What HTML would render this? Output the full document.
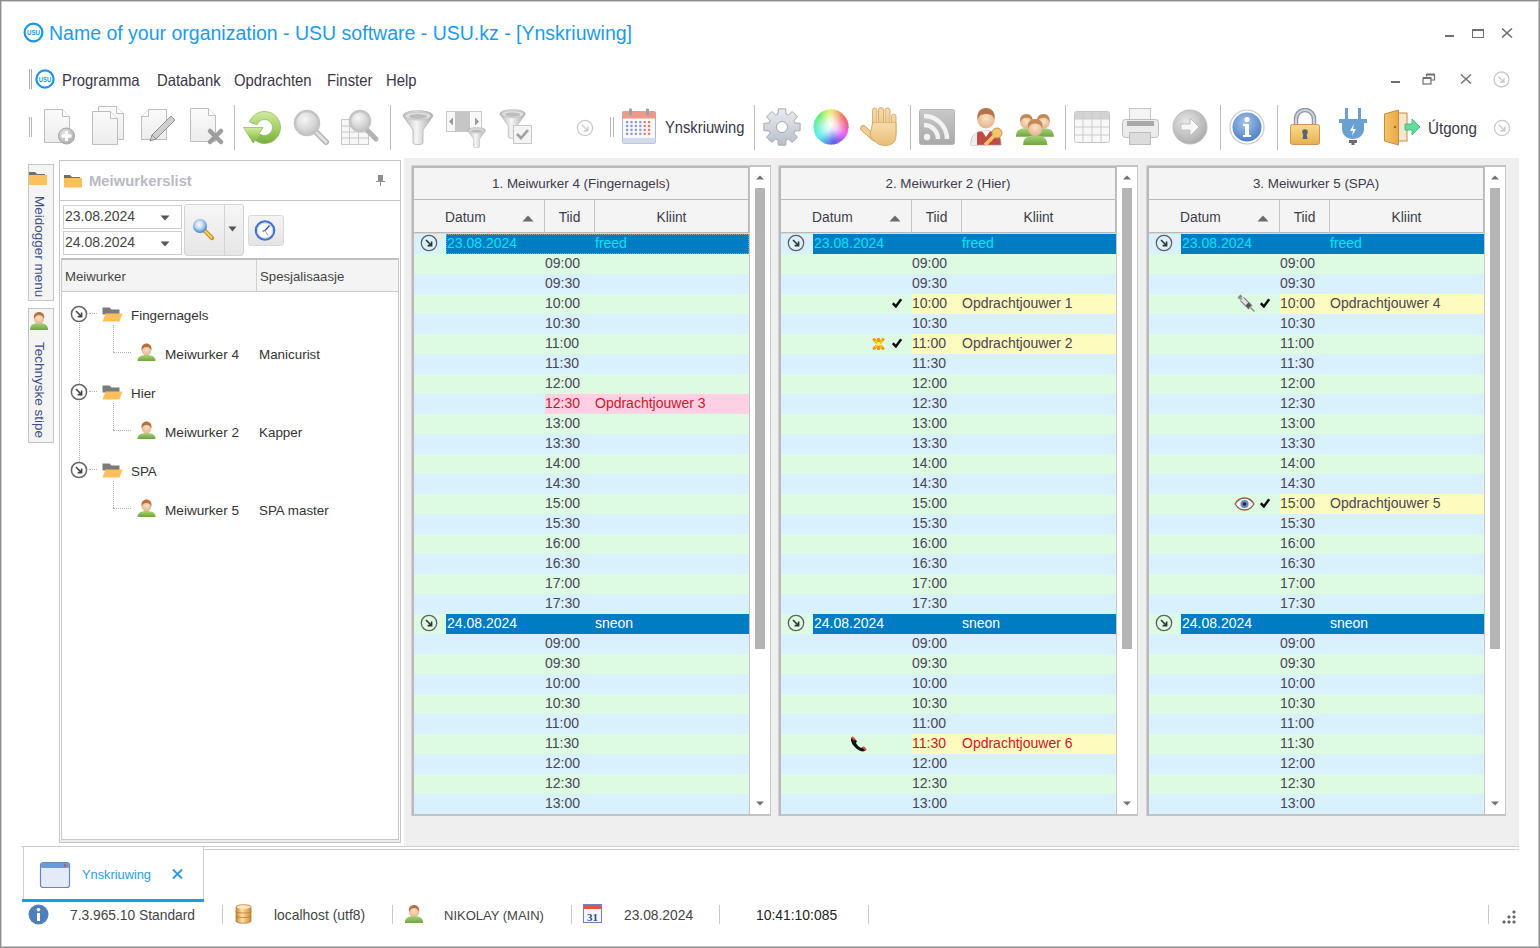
<!DOCTYPE html>
<html><head><meta charset="utf-8">
<style>
*{box-sizing:border-box;margin:0;padding:0}
html,body{width:1540px;height:948px;overflow:hidden;background:#fff;font-family:"Liberation Sans",sans-serif;color:#333}
.abs{position:absolute}
#win{position:absolute;left:0;top:0;width:1540px;height:948px;border:1px solid #8f8f8f;box-shadow:inset 1px 1px 0 #cdcdcd,inset -1px -1px 0 #c4c4c4;background:#fff}
.t{position:absolute;white-space:nowrap}
/* title */
#title{left:49px;top:20px;font-size:19.5px;color:#1a9cea;line-height:26px}
/* menu */
.menu{top:71px;font-size:16.5px;color:#3b3546;line-height:18px;transform-origin:0 0;transform:scaleX(0.9)}
/* toolbar */
.sep{position:absolute;width:1px;background:#bdbdbd}
/* gray work area */
#work{left:404px;top:158px;width:1115px;height:688px;background:#efefef}
.grid{position:absolute;top:165px;height:649px;border:2px solid #b7b7b7;background:#fff}
.gh1{position:absolute;left:0;top:0;right:0;height:33px;background:#f4f4f4;border-bottom:1px solid #b7b7b7;font-size:13.5px;color:#3b3546;text-align:center;line-height:34px}
.gh2{position:absolute;left:0;top:33px;right:0;height:34px;background:#f4f4f4;border-bottom:1px solid #b7b7b7;font-size:13.5px;color:#3b3546}
.row{position:absolute;left:0;right:0;height:20px;font-size:14px;line-height:20px;color:#3b3546}
.ev{background:#d9f0fd}
.od{background:#dff9e2}
.sb{position:absolute;top:165px;width:22px;height:649px;background:#fff;border:1px solid #d0d0d0;border-left:none}
</style></head><body>
<div id="win"></div>
<svg width="0" height="0" style="position:absolute"><defs>
<linearGradient id="gdoc" x1="0" y1="0" x2="0" y2="1"><stop offset="0" stop-color="#fbfbfb"/><stop offset="1" stop-color="#ececec"/></linearGradient>
<radialGradient id="ggray" cx="0.4" cy="0.35" r="0.7"><stop offset="0" stop-color="#e8e8e8"/><stop offset="1" stop-color="#a9a9a9"/></radialGradient>
<linearGradient id="ggreen" x1="0" y1="0" x2="0" y2="1"><stop offset="0" stop-color="#c4e08e"/><stop offset="1" stop-color="#7fb43c"/></linearGradient>
<radialGradient id="glens" cx="0.4" cy="0.35" r="0.6"><stop offset="0" stop-color="#f7f7f7"/><stop offset="1" stop-color="#c9c9c9"/></radialGradient>
<linearGradient id="gfun" x1="0" y1="0" x2="1" y2="0"><stop offset="0" stop-color="#b5b5b5"/><stop offset="0.45" stop-color="#f5f5f5"/><stop offset="1" stop-color="#a8a8a8"/></linearGradient>
<linearGradient id="ggear" x1="0" y1="0" x2="0" y2="1"><stop offset="0" stop-color="#e9ecf1"/><stop offset="1" stop-color="#b9bec8"/></linearGradient>
<radialGradient id="gwheelw" cx="0.5" cy="0.5" r="0.5"><stop offset="0" stop-color="#fff" stop-opacity="1"/><stop offset="0.25" stop-color="#fff" stop-opacity="0.8"/><stop offset="1" stop-color="#fff" stop-opacity="0"/></radialGradient>
<linearGradient id="ghand" x1="0" y1="0" x2="0" y2="1"><stop offset="0" stop-color="#f6dcaa"/><stop offset="1" stop-color="#e8bd78"/></linearGradient>
<linearGradient id="grss" x1="0" y1="0" x2="0" y2="1"><stop offset="0" stop-color="#c9c9c9"/><stop offset="1" stop-color="#a9a9a9"/></linearGradient>
<radialGradient id="ginfo" cx="0.45" cy="0.35" r="0.65"><stop offset="0" stop-color="#a8c4ee"/><stop offset="1" stop-color="#4f7fc6"/></radialGradient>
<linearGradient id="glock" x1="0" y1="0" x2="0" y2="1"><stop offset="0" stop-color="#f9dc8e"/><stop offset="1" stop-color="#e6b14f"/></linearGradient>
<linearGradient id="gdoor" x1="0" y1="0" x2="1" y2="0"><stop offset="0" stop-color="#f6c56b"/><stop offset="1" stop-color="#e9a848"/></linearGradient>
<radialGradient id="gface" cx="0.5" cy="0.4" r="0.6"><stop offset="0" stop-color="#fbe2c4"/><stop offset="1" stop-color="#e3b48a"/></radialGradient>
<linearGradient id="gpersg" x1="0" y1="0" x2="0" y2="1"><stop offset="0" stop-color="#a9d27a"/><stop offset="1" stop-color="#6ea43d"/></linearGradient>
<linearGradient id="gfolder" x1="0" y1="0" x2="0" y2="1"><stop offset="0" stop-color="#fcd27a"/><stop offset="1" stop-color="#f6b34e"/></linearGradient>
</defs></svg>


<!-- title bar -->
<svg class="abs" style="left:23px;top:22px" width="21" height="21" viewBox="0 0 21 21"><circle cx="10.5" cy="10.5" r="8.9" fill="none" stroke="#1b95ea" stroke-width="2.2"/><text x="10.5" y="13.4" font-family="Liberation Sans" font-weight="bold" font-size="8" fill="#1b95ea" text-anchor="middle" textLength="13" lengthAdjust="spacingAndGlyphs">USU</text></svg>
<div class="t" id="title">Name of your organization - USU software - USU.kz - [Ynskriuwing]</div>


<!-- window controls -->
<div class="abs" style="left:1445px;top:35px;width:9px;height:2px;background:#6f6f6f"></div>
<div class="abs" style="left:1472px;top:29px;width:12px;height:9px;border:1px solid #6f6f6f;border-top-width:2px"></div>
<svg class="abs" style="left:1501px;top:28px" width="12" height="10" viewBox="0 0 12 10"><path d="M1 0.5L11 9.5M11 0.5L1 9.5" stroke="#6f6f6f" stroke-width="1.6"/></svg>

<!-- menu bar -->
<div class="abs" style="left:29px;top:69px;width:1px;height:20px;background:#aaa"></div>
<div class="abs" style="left:31px;top:69px;width:1px;height:20px;background:#aaa"></div>
<svg class="abs" style="left:35px;top:69px" width="20" height="20" viewBox="0 0 20 20"><circle cx="10" cy="10" r="8.6" fill="none" stroke="#1b95ea" stroke-width="2.2"/><text x="10" y="12.8" font-family="Liberation Sans" font-weight="bold" font-size="7.6" fill="#1b95ea" text-anchor="middle" textLength="12.5" lengthAdjust="spacingAndGlyphs">USU</text></svg>
<div class="t menu" style="left:62px">Programma</div>
<div class="t menu" style="left:157px">Databank</div>
<div class="t menu" style="left:234px">Opdrachten</div>
<div class="t menu" style="left:327px">Finster</div>
<div class="t menu" style="left:386px">Help</div>
<div class="abs" style="left:1391px;top:81px;width:9px;height:2px;background:#6f6f6f"></div>
<svg class="abs" style="left:1422px;top:73px" width="14" height="12" viewBox="0 0 14 12"><path d="M4.5 3.5V1.5h8v5.5h-4" fill="none" stroke="#6f6f6f" stroke-width="1.2"/><path d="M4.5 1.5h8" stroke="#6f6f6f" stroke-width="2"/><rect x="1" y="5" width="8" height="6" fill="none" stroke="#6f6f6f" stroke-width="1.2"/><path d="M1 5h8" stroke="#6f6f6f" stroke-width="2"/></svg>
<svg class="abs" style="left:1460px;top:74px" width="12" height="10" viewBox="0 0 12 10"><path d="M1 0.5L11 9.5M11 0.5L1 9.5" stroke="#7a7a7a" stroke-width="1.6"/></svg>
<svg class="abs" style="left:1493px;top:71px" width="17" height="17" viewBox="0 0 17 17"><circle cx="8.5" cy="8.5" r="7.5" fill="none" stroke="#c8c8c8" stroke-width="1.3"/><path d="M5.5 5.5L11 11M11 7v4H7" fill="none" stroke="#c8c8c8" stroke-width="1.3"/></svg>

<!-- toolbar -->
<div class="abs" style="left:29px;top:117px;width:1px;height:20px;background:#b5b5b5"></div><div class="abs" style="left:31px;top:117px;width:1px;height:20px;background:#b5b5b5"></div>
<svg class="abs" style="left:43px;top:108px" width="34" height="37" viewBox="0 0 34 37"><path d="M1.5 1.5h18l7 7v26h-25z" fill="url(#gdoc)" stroke="#bdbdbd" stroke-width="1"/><path d="M19.5 1.5v7h7" fill="#fff" stroke="#bdbdbd" stroke-width="1"/><circle cx="23.5" cy="28" r="8" fill="url(#ggray)" stroke="#a6a6a6"/><path d="M23.5 23v10M18.5 28h10" stroke="#fff" stroke-width="3"/></svg>
<svg class="abs" style="left:91px;top:106px" width="34" height="40" viewBox="0 0 34 40"><path d="M7.5 0.5h18l7 7v26h-25z" fill="url(#gdoc)" stroke="#bdbdbd" stroke-width="1"/><path d="M25.5 0.5v7h7" fill="#fff" stroke="#bdbdbd" stroke-width="1"/><path d="M1.5 5.5h18l7 7v26h-25z" fill="url(#gdoc)" stroke="#bdbdbd" stroke-width="1"/><path d="M19.5 5.5v7h7" fill="#fff" stroke="#bdbdbd" stroke-width="1"/></svg>
<svg class="abs" style="left:140px;top:108px" width="36" height="39" viewBox="0 0 36 39"><path d="M1.5 8.5l7-7h18v30h-25z" fill="url(#gdoc)" stroke="#bdbdbd"/><path d="M8.5 1.5v7h-7" fill="#fff" stroke="#bdbdbd"/><path d="M31 8l4 4-19 19-6 2 2-6z" fill="#cfcfcf" stroke="#8d8d8d" stroke-width="1"/><path d="M12 27l4 4" stroke="#8d8d8d"/></svg>
<svg class="abs" style="left:189px;top:107px" width="36" height="40" viewBox="0 0 36 40"><path d="M1.5 1.5h18l7 7v26h-25z" fill="url(#gdoc)" stroke="#bdbdbd" stroke-width="1"/><path d="M19.5 1.5v7h7" fill="#fff" stroke="#bdbdbd" stroke-width="1"/><path d="M21 24l11 11M32 24l-11 11" stroke="#9d9d9d" stroke-width="4.5" stroke-linecap="round"/></svg>
<div class="sep" style="left:234px;top:105px;height:45px"></div>
<svg class="abs" style="left:243px;top:110px" width="39" height="35" viewBox="0 0 39 35"><defs><linearGradient id="grf" x1="0" y1="0" x2="0" y2="1"><stop offset="0" stop-color="#d2eaa4"/><stop offset="0.5" stop-color="#a6d06a"/><stop offset="1" stop-color="#78ad3a"/></linearGradient></defs><path d="M6.46 12.03A16 16 0 1 1 12.32 30.61L16.91 24.05A8 8 0 1 0 13.98 14.76Z" fill="url(#grf)" stroke="#86b84a" stroke-width="0.7"/><path d="M0.5 17.5h19.5l-9.8 15.5z" fill="url(#grf)" stroke="#86b84a" stroke-width="0.7"/></svg>
<svg class="abs" style="left:293px;top:109px" width="37" height="37" viewBox="0 0 37 37"><path d="M22 22l11 11" stroke="#b3b3b3" stroke-width="6" stroke-linecap="round"/><path d="M22 22l11 11" stroke="#e3e3e3" stroke-width="3" stroke-linecap="round"/><circle cx="14" cy="14" r="12" fill="url(#glens)" stroke="#c4c4c4" stroke-width="2.5"/></svg>
<svg class="abs" style="left:340px;top:109px" width="40" height="37" viewBox="0 0 40 37"><rect x="1.5" y="10.5" width="27" height="25" fill="#f7f7f7" stroke="#c8c8c8"/><path d="M1.5 17h27M1.5 23h27M1.5 29h27M9.5 10.5v25M18.5 10.5v25" stroke="#c8c8c8"/><path d="M27 21l9 9" stroke="#b3b3b3" stroke-width="5" stroke-linecap="round"/><circle cx="20" cy="12" r="10" fill="url(#glens)" stroke="#c4c4c4" stroke-width="2.5"/></svg>
<div class="sep" style="left:390px;top:105px;height:45px"></div>
<svg class="abs" style="left:401px;top:109px" width="34" height="37" viewBox="0 0 34 37"><g transform="translate(1 1) scale(1)"><path d="M1 6c0-7 30-7 30 0l-10 14v13c0 2-10 2-10 0v-13z" fill="url(#gfun)" stroke="#b2b2b2" stroke-width="0.8"/><ellipse cx="16" cy="6" rx="13" ry="4" fill="#e0e0e0" stroke="#c5c5c5"/><ellipse cx="16" cy="6.5" rx="9" ry="2.5" fill="#bdbdbd"/></g></svg>
<svg class="abs" style="left:445px;top:110px" width="42" height="38" viewBox="0 0 42 38"><rect x="1.5" y="1.5" width="35" height="20" fill="#f8f8f8" stroke="#c9c9c9"/><rect x="10" y="1.5" width="15" height="20" fill="#c6c6c6"/><path d="M4 11.5l4-4v8zM34 11.5l-4-4v8z" fill="#9a9a9a"/><g transform="translate(22 17) scale(0.6)"><path d="M1 6c0-7 30-7 30 0l-10 14v13c0 2-10 2-10 0v-13z" fill="url(#gfun)" stroke="#b2b2b2" stroke-width="0.8"/><ellipse cx="16" cy="6" rx="13" ry="4" fill="#e0e0e0" stroke="#c5c5c5"/><ellipse cx="16" cy="6.5" rx="9" ry="2.5" fill="#bdbdbd"/></g></svg>
<svg class="abs" style="left:498px;top:108px" width="36" height="38" viewBox="0 0 36 38"><g transform="translate(1 1) scale(0.85)"><path d="M1 6c0-7 30-7 30 0l-10 14v13c0 2-10 2-10 0v-13z" fill="url(#gfun)" stroke="#b2b2b2" stroke-width="0.8"/><ellipse cx="16" cy="6" rx="13" ry="4" fill="#e0e0e0" stroke="#c5c5c5"/><ellipse cx="16" cy="6.5" rx="9" ry="2.5" fill="#bdbdbd"/></g><rect x="15.5" y="17.5" width="18" height="18" fill="#f4f4f4" stroke="#c6c6c6"/><path d="M19 26l4 4 7-8" fill="none" stroke="#a0a0a0" stroke-width="2.6"/></svg>
<svg class="abs" style="left:576px;top:119px" width="19" height="18" viewBox="0 0 19 18"><circle cx="9" cy="9" r="7.6" fill="none" stroke="#c9c9c9" stroke-width="1.3"/><path d="M5.8 5.8L11.5 11.5M11.8 7.5v4.2H7.6" fill="none" stroke="#c9c9c9" stroke-width="1.4"/></svg>
<div class="abs" style="left:610px;top:117px;width:1px;height:20px;background:#b5b5b5"></div><div class="abs" style="left:613px;top:117px;width:1px;height:20px;background:#b5b5b5"></div>
<svg class="abs" style="left:621px;top:108px" width="37" height="38" viewBox="0 0 37 38"><rect x="1.5" y="3.5" width="33" height="32" rx="1.5" fill="#f7f8fc" stroke="#a9b3d3"/><rect x="1.5" y="3.5" width="33" height="7" fill="#ee9a86"/><rect x="1.5" y="30" width="33" height="5.5" fill="#d4daee"/><rect x="8" y="0.5" width="3" height="7" rx="1" fill="#9aa0b3"/><rect x="25" y="0.5" width="3" height="7" rx="1" fill="#9aa0b3"/><rect x="5.0" y="13.0" width="2.2" height="2.2" fill="#8f98c4"/><rect x="9.4" y="13.0" width="2.2" height="2.2" fill="#8f98c4"/><rect x="13.8" y="13.0" width="2.2" height="2.2" fill="#8f98c4"/><rect x="18.200000000000003" y="13.0" width="2.2" height="2.2" fill="#8f98c4"/><rect x="22.6" y="13.0" width="2.2" height="2.2" fill="#e47a66"/><rect x="27.0" y="13.0" width="2.2" height="2.2" fill="#e47a66"/><rect x="5.0" y="16.9" width="2.2" height="2.2" fill="#8f98c4"/><rect x="9.4" y="16.9" width="2.2" height="2.2" fill="#8f98c4"/><rect x="13.8" y="16.9" width="2.2" height="2.2" fill="#8f98c4"/><rect x="18.200000000000003" y="16.9" width="2.2" height="2.2" fill="#8f98c4"/><rect x="22.6" y="16.9" width="2.2" height="2.2" fill="#e47a66"/><rect x="27.0" y="16.9" width="2.2" height="2.2" fill="#e47a66"/><rect x="5.0" y="20.8" width="2.2" height="2.2" fill="#8f98c4"/><rect x="9.4" y="20.8" width="2.2" height="2.2" fill="#8f98c4"/><rect x="13.8" y="20.8" width="2.2" height="2.2" fill="#8f98c4"/><rect x="18.200000000000003" y="20.8" width="2.2" height="2.2" fill="#8f98c4"/><rect x="22.6" y="20.8" width="2.2" height="2.2" fill="#e47a66"/><rect x="27.0" y="20.8" width="2.2" height="2.2" fill="#e47a66"/><rect x="5.0" y="24.7" width="2.2" height="2.2" fill="#8f98c4"/><rect x="9.4" y="24.7" width="2.2" height="2.2" fill="#8f98c4"/><rect x="13.8" y="24.7" width="2.2" height="2.2" fill="#8f98c4"/><rect x="18.200000000000003" y="24.7" width="2.2" height="2.2" fill="#8f98c4"/><rect x="22.6" y="24.7" width="2.2" height="2.2" fill="#e47a66"/><rect x="27.0" y="24.7" width="2.2" height="2.2" fill="#e47a66"/></svg>
<div class="t" style="left:665px;top:119px;font-size:16px;line-height:18px;color:#3b3546;transform-origin:0 0;transform:scaleX(0.92)">Ynskriuwing</div>
<div class="sep" style="left:754px;top:105px;height:45px"></div>
<svg class="abs" style="left:763px;top:108px" width="38" height="38" viewBox="0 0 38 38"><path d="M31.90 15.01L37.13 15.32L37.13 22.68L31.90 22.99L31.47 24.17L30.94 25.30L34.42 29.22L29.22 34.42L25.30 30.94L24.17 31.47L22.99 31.90L22.68 37.13L15.32 37.13L15.01 31.90L13.83 31.47L12.70 30.94L8.78 34.42L3.58 29.22L7.06 25.30L6.53 24.17L6.10 22.99L0.87 22.68L0.87 15.32L6.10 15.01L6.53 13.83L7.06 12.70L3.58 8.78L8.78 3.58L12.70 7.06L13.83 6.53L15.01 6.10L15.32 0.87L22.68 0.87L22.99 6.10L24.17 6.53L25.30 7.06L29.22 3.58L34.42 8.78L30.94 12.70L31.47 13.83Z" fill="url(#ggear)" stroke="#a3a8b2" stroke-width="1"/><circle cx="19" cy="19" r="5.5" fill="#fff" stroke="#a3a8b2"/></svg>
<svg class="abs" style="left:813px;top:109px" width="37" height="37" viewBox="0 0 37 37"><defs><clipPath id="cw"><circle cx="18" cy="18" r="17.5"/></clipPath><radialGradient id="gww" cx="0.5" cy="0.45" r="0.55"><stop offset="0" stop-color="#fff" stop-opacity="1"/><stop offset="0.3" stop-color="#fff" stop-opacity="0.75"/><stop offset="0.75" stop-color="#fff" stop-opacity="0.15"/><stop offset="1" stop-color="#fff" stop-opacity="0"/></radialGradient></defs><g clip-path="url(#cw)"><path d="M18 18L43.00 18.00L42.56 22.68Z" fill="hsl(324,80%,62%)" stroke="hsl(324,80%,62%)" stroke-width="0.8"/><path d="M18 18L42.62 22.34L41.37 26.88Z" fill="hsl(313,80%,62%)" stroke="hsl(313,80%,62%)" stroke-width="0.8"/><path d="M18 18L41.49 26.55L39.47 30.80Z" fill="hsl(302,80%,62%)" stroke="hsl(302,80%,62%)" stroke-width="0.8"/><path d="M18 18L39.65 30.50L36.92 34.34Z" fill="hsl(291,80%,62%)" stroke="hsl(291,80%,62%)" stroke-width="0.8"/><path d="M18 18L37.15 34.07L33.80 37.37Z" fill="hsl(280,80%,62%)" stroke="hsl(280,80%,62%)" stroke-width="0.8"/><path d="M18 18L34.07 37.15L30.20 39.82Z" fill="hsl(269,80%,62%)" stroke="hsl(269,80%,62%)" stroke-width="0.8"/><path d="M18 18L30.50 39.65L26.22 41.61Z" fill="hsl(258,80%,62%)" stroke="hsl(258,80%,62%)" stroke-width="0.8"/><path d="M18 18L26.55 41.49L22.00 42.68Z" fill="hsl(247,80%,62%)" stroke="hsl(247,80%,62%)" stroke-width="0.8"/><path d="M18 18L22.34 42.62L17.65 43.00Z" fill="hsl(236,80%,62%)" stroke="hsl(236,80%,62%)" stroke-width="0.8"/><path d="M18 18L18.00 43.00L13.32 42.56Z" fill="hsl(225,80%,62%)" stroke="hsl(225,80%,62%)" stroke-width="0.8"/><path d="M18 18L13.66 42.62L9.12 41.37Z" fill="hsl(215,80%,62%)" stroke="hsl(215,80%,62%)" stroke-width="0.8"/><path d="M18 18L9.45 41.49L5.20 39.47Z" fill="hsl(205,80%,62%)" stroke="hsl(205,80%,62%)" stroke-width="0.8"/><path d="M18 18L5.50 39.65L1.66 36.92Z" fill="hsl(195,80%,62%)" stroke="hsl(195,80%,62%)" stroke-width="0.8"/><path d="M18 18L1.93 37.15L-1.37 33.80Z" fill="hsl(185,80%,62%)" stroke="hsl(185,80%,62%)" stroke-width="0.8"/><path d="M18 18L-1.15 34.07L-3.82 30.20Z" fill="hsl(181,80%,62%)" stroke="hsl(181,80%,62%)" stroke-width="0.8"/><path d="M18 18L-3.65 30.50L-5.61 26.22Z" fill="hsl(176,80%,62%)" stroke="hsl(176,80%,62%)" stroke-width="0.8"/><path d="M18 18L-5.49 26.55L-6.68 22.00Z" fill="hsl(172,80%,62%)" stroke="hsl(172,80%,62%)" stroke-width="0.8"/><path d="M18 18L-6.62 22.34L-7.00 17.65Z" fill="hsl(167,80%,62%)" stroke="hsl(167,80%,62%)" stroke-width="0.8"/><path d="M18 18L-7.00 18.00L-6.56 13.32Z" fill="hsl(160,80%,62%)" stroke="hsl(160,80%,62%)" stroke-width="0.8"/><path d="M18 18L-6.62 13.66L-5.37 9.12Z" fill="hsl(150,80%,62%)" stroke="hsl(150,80%,62%)" stroke-width="0.8"/><path d="M18 18L-5.49 9.45L-3.47 5.20Z" fill="hsl(140,80%,62%)" stroke="hsl(140,80%,62%)" stroke-width="0.8"/><path d="M18 18L-3.65 5.50L-0.92 1.66Z" fill="hsl(130,80%,62%)" stroke="hsl(130,80%,62%)" stroke-width="0.8"/><path d="M18 18L-1.15 1.93L2.20 -1.37Z" fill="hsl(120,80%,62%)" stroke="hsl(120,80%,62%)" stroke-width="0.8"/><path d="M18 18L1.93 -1.15L5.80 -3.82Z" fill="hsl(107,80%,62%)" stroke="hsl(107,80%,62%)" stroke-width="0.8"/><path d="M18 18L5.50 -3.65L9.78 -5.61Z" fill="hsl(93,80%,62%)" stroke="hsl(93,80%,62%)" stroke-width="0.8"/><path d="M18 18L9.45 -5.49L14.00 -6.68Z" fill="hsl(80,80%,62%)" stroke="hsl(80,80%,62%)" stroke-width="0.8"/><path d="M18 18L13.66 -6.62L18.35 -7.00Z" fill="hsl(67,80%,62%)" stroke="hsl(67,80%,62%)" stroke-width="0.8"/><path d="M18 18L18.00 -7.00L22.68 -6.56Z" fill="hsl(54,80%,62%)" stroke="hsl(54,80%,62%)" stroke-width="0.8"/><path d="M18 18L22.34 -6.62L26.88 -5.37Z" fill="hsl(43,80%,62%)" stroke="hsl(43,80%,62%)" stroke-width="0.8"/><path d="M18 18L26.55 -5.49L30.80 -3.47Z" fill="hsl(32,80%,62%)" stroke="hsl(32,80%,62%)" stroke-width="0.8"/><path d="M18 18L30.50 -3.65L34.34 -0.92Z" fill="hsl(21,80%,62%)" stroke="hsl(21,80%,62%)" stroke-width="0.8"/><path d="M18 18L34.07 -1.15L37.37 2.20Z" fill="hsl(10,80%,62%)" stroke="hsl(10,80%,62%)" stroke-width="0.8"/><path d="M18 18L37.15 1.93L39.82 5.80Z" fill="hsl(1,80%,62%)" stroke="hsl(1,80%,62%)" stroke-width="0.8"/><path d="M18 18L39.65 5.50L41.61 9.78Z" fill="hsl(352,80%,62%)" stroke="hsl(352,80%,62%)" stroke-width="0.8"/><path d="M18 18L41.49 9.45L42.68 14.00Z" fill="hsl(343,80%,62%)" stroke="hsl(343,80%,62%)" stroke-width="0.8"/><path d="M18 18L42.62 13.66L43.00 18.35Z" fill="hsl(334,80%,62%)" stroke="hsl(334,80%,62%)" stroke-width="0.8"/><circle cx="18" cy="18" r="18" fill="url(#gww)"/></g></svg>
<svg class="abs" style="left:860px;top:107px" width="37" height="40" viewBox="0 0 37 40"><path d="M3.5 21.5L14 31" stroke="#cf9f5f" stroke-width="6.4" stroke-linecap="round"/><path d="M3.5 21.5L14 31" stroke="#f0cf95" stroke-width="4.8" stroke-linecap="round"/><rect x="12.5" y="1" width="4.5" height="26" rx="2.2" fill="url(#ghand)" stroke="#cf9f5f" stroke-width="0.8"/><rect x="18.5" y="0.5" width="5" height="26" rx="2.4" fill="url(#ghand)" stroke="#cf9f5f" stroke-width="0.8"/><rect x="25" y="1" width="5" height="26" rx="2.4" fill="url(#ghand)" stroke="#cf9f5f" stroke-width="0.8"/><rect x="31.5" y="7" width="4.5" height="22" rx="2.2" fill="url(#ghand)" stroke="#cf9f5f" stroke-width="0.8"/><path d="M12.5 16h23.5v13c0 6-4 9.5-11 9.5-5 0-8-2-11-5l-4-4.5z" fill="url(#ghand)" stroke="#cf9f5f" stroke-width="0.8"/><path d="M13.3 16.5h22" stroke="#f3d8a6" stroke-width="1.2"/></svg>
<div class="sep" style="left:910px;top:105px;height:45px"></div>
<svg class="abs" style="left:918px;top:108px" width="38" height="38" viewBox="0 0 38 38"><rect x="1.5" y="1.5" width="35" height="35" rx="2" fill="url(#grss)" stroke="#b5b5b5"/><circle cx="9" cy="29" r="3.2" fill="#f2f2f2"/><path d="M6 17a14 14 0 0 1 14 14M6 8a23 23 0 0 1 23 23" fill="none" stroke="#f2f2f2" stroke-width="4.5"/></svg>
<svg class="abs" style="left:968px;top:106px" width="38" height="41" viewBox="0 0 38 41"><path d="M3 39c0-10 4-14 15-14s15 4 15 14z" fill="#c24a45" stroke="#9e9e9e" stroke-width="0.8"/><path d="M14 25l4 6 4-6z" fill="#fff"/><path d="M3 39c0-7 2-11 6-13v13z" fill="#eee"/><circle cx="18" cy="14" r="8.5" fill="url(#gface)"/><path d="M9.5 14c-1-8 3-12 8.5-12s10 4 8.5 12c-1-4-3-6-8.5-6s-7 2-8.5 6z" fill="#b8734a"/><circle cx="29" cy="27" r="5" fill="#f2c56a" stroke="#c89a44"/><path d="M26 30l-9 9" stroke="#f2c56a" stroke-width="3.5"/></svg>
<svg class="abs" style="left:1015px;top:110px" width="40" height="35" viewBox="0 0 40 35"><g transform="translate(0 4) scale(0.95)"><path d="M1 24c0-7 4-9 11-9s11 2 11 9z" fill="url(#gpersg)"/><circle cx="12" cy="9" r="6.5" fill="url(#gface)"/><path d="M5.5 9c-1-6 2-9 6.5-9s7.5 3 6.5 9c-1-3-3-5-6.5-5s-5.5 2-6.5 5z" fill="#c38758"/></g><g transform="translate(17 4) scale(0.95)"><path d="M1 24c0-7 4-9 11-9s11 2 11 9z" fill="url(#gpersg)"/><circle cx="12" cy="9" r="6.5" fill="url(#gface)"/><path d="M5.5 9c-1-6 2-9 6.5-9s7.5 3 6.5 9c-1-3-3-5-6.5-5s-5.5 2-6.5 5z" fill="#c38758"/></g><g transform="translate(7 9) scale(1.1)"><path d="M1 24c0-7 4-9 11-9s11 2 11 9z" fill="url(#gpersg)"/><circle cx="12" cy="9" r="6.5" fill="url(#gface)"/><path d="M5.5 9c-1-6 2-9 6.5-9s7.5 3 6.5 9c-1-3-3-5-6.5-5s-5.5 2-6.5 5z" fill="#c38758"/></g></svg>
<div class="sep" style="left:1065px;top:105px;height:45px"></div>
<svg class="abs" style="left:1073px;top:110px" width="38" height="34" viewBox="0 0 38 34"><rect x="1.5" y="1.5" width="35" height="31" rx="2" fill="#f8f8f8" stroke="#c6c6c6"/><rect x="2" y="2" width="34" height="7" fill="#d4d4d4"/><path d="M1.5 9h35M1.5 17h35M1.5 25h35M10 1.5v31M19 1.5v31M28 1.5v31" stroke="#cbcbcb"/></svg>
<svg class="abs" style="left:1121px;top:107px" width="40" height="39" viewBox="0 0 40 39"><rect x="8.5" y="1.5" width="21" height="14" fill="#f4f4f4" stroke="#c4c4c4"/><rect x="1.5" y="12.5" width="36" height="18" rx="3" fill="#ececec" stroke="#bdbdbd"/><rect x="6" y="14" width="27" height="5" fill="#a9a9a9"/><rect x="8.5" y="25.5" width="21" height="12" fill="#dcdcdc" stroke="#bdbdbd"/></svg>
<svg class="abs" style="left:1172px;top:109px" width="36" height="37" viewBox="0 0 36 37"><circle cx="18" cy="18" r="17" fill="url(#ggray)" stroke="#bdbdbd"/><path d="M9 15h9v-6l9 9-9 9v-6h-9z" fill="#f8f8f8" stroke="#b5b5b5" stroke-width="0.8"/></svg>
<div class="sep" style="left:1220px;top:105px;height:45px"></div>
<svg class="abs" style="left:1229px;top:109px" width="37" height="37" viewBox="0 0 37 37"><circle cx="18" cy="18" r="17" fill="#fff" stroke="#c3cbe4" stroke-width="1.2"/><circle cx="18" cy="18" r="14.5" fill="url(#ginfo)"/><circle cx="18" cy="10.5" r="2.6" fill="#fff"/><path d="M14 15h6v11h2v2h-8v-2h2v-9h-2z" fill="#fff"/></svg>
<div class="sep" style="left:1277px;top:105px;height:45px"></div>
<svg class="abs" style="left:1289px;top:108px" width="32" height="38" viewBox="0 0 32 38"><path d="M7 17V11a9 9 0 0 1 18 0v6" fill="none" stroke="#8e97a3" stroke-width="4.5"/><path d="M7 17V11a9 9 0 0 1 18 0v6" fill="none" stroke="#cfd4dc" stroke-width="2"/><rect x="1.5" y="16.5" width="29" height="20" rx="2" fill="url(#glock)" stroke="#d0905a"/><circle cx="16" cy="24" r="2.8" fill="#5b6470"/><path d="M14.5 25h3l1 6h-5z" fill="#5b6470"/></svg>
<svg class="abs" style="left:1338px;top:107px" width="31" height="40" viewBox="0 0 31 40"><rect x="7" y="1" width="3" height="12" fill="#6aa0d0"/><rect x="20" y="1" width="3" height="12" fill="#6aa0d0"/><path d="M1 12h28v4h-3v6c0 6-5 10-11 10s-11-4-11-10v-6h-3z" fill="#6aa0d0"/><path d="M16 17l-4 7h3l-1 5 4-7h-3z" fill="#fff"/><rect x="11" y="33" width="8" height="3" fill="#6b6b6b"/><rect x="13.5" y="35" width="3" height="3" fill="#6b6b6b"/></svg>
<svg class="abs" style="left:1383px;top:109px" width="39" height="37" viewBox="0 0 39 37"><rect x="14" y="4" width="10" height="28" fill="#f3e7cf" stroke="#c58a3c"/><path d="M1.5 5l14-4v35l-14-4z" fill="url(#gdoor)" stroke="#c58a3c"/><circle cx="12" cy="18" r="1.2" fill="#9a6a2c"/><path d="M22 15h7v-5l8 8-8 8v-5h-7z" fill="#62dd9a" stroke="#3fae72" stroke-width="0.8"/></svg>
<div class="t" style="left:1428px;top:119px;font-size:16.5px;line-height:18px;color:#3b3546;transform-origin:0 0;transform:scaleX(0.92)">Útgong</div>
<svg class="abs" style="left:1493px;top:119px" width="18" height="18" viewBox="0 0 18 18"><circle cx="9" cy="9" r="7.6" fill="none" stroke="#c9c9c9" stroke-width="1.3"/><path d="M5.8 5.8L11.5 11.5M11.8 7.5v4.2H7.6" fill="none" stroke="#c9c9c9" stroke-width="1.4"/></svg>

<!-- main area -->
<div class="abs" style="left:28px;top:164px;width:26px;height:137px;background:#f4f4f4;border:1px solid #c4c4c4"></div>
<div class="abs" style="left:28px;top:308px;width:26px;height:135px;background:#f4f4f4;border:1px solid #c4c4c4"></div>
<svg class="abs" style="left:28px;top:170px" width="19" height="16" viewBox="0 0 19 16"><path d="M1 2h6l2 2h8v2H1z" fill="#6e6e6e"/><rect x="1" y="5" width="18" height="10" fill="#fbbf5c"/></svg>
<div class="t" style="left:39px;top:196px;transform-origin:0 0;transform:rotate(90deg) translate(0,-8px);font-size:13.5px;line-height:16px;color:#3d4f85">Meidogger menu</div>
<svg class="abs" style="left:29px;top:311px" width="20" height="20" viewBox="0 0 20 20"><path d="M1 19c0-5 3-7 9-7s9 2 9 7z" fill="url(#gpersg)"/><circle cx="10" cy="8" r="5" fill="url(#gface)"/><path d="M5 8c-1-5 2-7 5-7s6 2 5 7c-1-2-2-4-5-4s-4 2-5 4z" fill="#b9703f"/></svg>
<div class="t" style="left:39px;top:342px;transform-origin:0 0;transform:rotate(90deg) translate(0,-8px);font-size:13.5px;line-height:16px;color:#3d4f85">Technyske stipe</div>
<div class="abs" style="left:59px;top:160px;width:342px;height:683px;border:1px solid #c6c6c6;background:#fff"></div><div class="abs" style="left:60px;top:840px;width:340px;height:2px;background:#ececec"></div>
<div class="abs" style="left:60px;top:200px;width:340px;height:1px;background:#c6c6c6"></div>
<svg class="abs" style="left:63px;top:173px" width="19" height="15" viewBox="0 0 19 15"><path d="M1 2h6l2 2h8v2H1z" fill="#6e6e6e"/><rect x="1" y="5" width="18" height="9.5" fill="#fbbf5c"/></svg>
<div class="t" style="left:89px;top:172px;font-size:14.8px;font-weight:bold;line-height:18px;color:#b9b9c1">Meiwurkerslist</div>
<svg class="abs" style="left:375px;top:174px" width="11" height="13" viewBox="0 0 11 13"><path d="M3 1h5v6h2v1H1V7h2z" fill="#8d8d8d"/><rect x="5" y="8" width="1" height="4" fill="#8d8d8d"/></svg>
<div class="abs" style="left:63px;top:205px;width:119px;height:24px;border:1px solid #cdcdcd;background:#fff"></div>
<div class="t" style="left:65px;top:208px;font-size:14px;line-height:17px;color:#444">23.08.2024</div>
<svg class="abs" style="left:160px;top:215px" width="10" height="6" viewBox="0 0 10 6"><path d="M0.5 0.5h9l-4.5 5z" fill="#555"/></svg>
<div class="abs" style="left:63px;top:231px;width:119px;height:24px;border:1px solid #cdcdcd;background:#fff"></div>
<div class="t" style="left:65px;top:234px;font-size:14px;line-height:17px;color:#444">24.08.2024</div>
<svg class="abs" style="left:160px;top:241px" width="10" height="6" viewBox="0 0 10 6"><path d="M0.5 0.5h9l-4.5 5z" fill="#555"/></svg>
<div class="abs" style="left:184px;top:204px;width:60px;height:52px;border:1px solid #d3d3d3;border-radius:3px;background:linear-gradient(#f6f6f6,#e6e6e6)"></div>
<div class="abs" style="left:224px;top:205px;width:1px;height:50px;background:#d3d3d3"></div>
<svg class="abs" style="left:192px;top:218px" width="23" height="23" viewBox="0 0 23 23"><defs><radialGradient id="gsl" cx="0.45" cy="0.4" r="0.6"><stop offset="0" stop-color="#ffffff"/><stop offset="0.5" stop-color="#b9d6f5"/><stop offset="1" stop-color="#3f7fd0"/></radialGradient></defs><path d="M12 12l8 8" stroke="#c88a1e" stroke-width="4.2" stroke-linecap="round"/><path d="M12.5 12.5l7 7" stroke="#f7cf6a" stroke-width="2" stroke-linecap="round"/><circle cx="8" cy="8" r="7" fill="url(#gsl)"/></svg>
<svg class="abs" style="left:228px;top:226px" width="9" height="6" viewBox="0 0 9 6"><path d="M0.5 0.5h8l-4 5z" fill="#555"/></svg>
<div class="abs" style="left:248px;top:215px;width:36px;height:31px;border:1px solid #d8d8d8;border-radius:3px;background:linear-gradient(#f4f4f4,#e4e4e4)"></div>
<svg class="abs" style="left:254px;top:219px" width="23" height="23" viewBox="0 0 23 23"><circle cx="11" cy="11.5" r="9.2" fill="#fbfdff" stroke="#3f74c8" stroke-width="2.2"/><circle cx="11" cy="11.5" r="7.6" fill="none" stroke="#bcd3f2" stroke-width="1"/><path d="M11 11.5l4.5-5" stroke="#2a4f9c" stroke-width="1.2"/><path d="M11 11.5l-2.5 0.8" stroke="#2a4f9c" stroke-width="1.2"/><path d="M11 11.5l3 5" stroke="#f08b5b" stroke-width="1"/></svg>
<div class="abs" style="left:61px;top:258px;width:338px;height:582px;border:1px solid #c8c8c8;border-top:2px solid #c0c0c0;background:#fff"></div>
<div class="abs" style="left:62px;top:260px;width:336px;height:32px;background:#f4f4f4;border-bottom:1px solid #c8c8c8"></div>
<div class="abs" style="left:256px;top:260px;width:1px;height:32px;background:#d0d0d0"></div>
<div class="t" style="left:65px;top:268px;font-size:13.2px;line-height:17px;color:#444">Meiwurker</div>
<div class="t" style="left:260px;top:268px;font-size:13.2px;line-height:17px;color:#444">Spesjalisaasje</div>
<div class="abs" style="left:79px;top:323px;width:1px;height:139px;border-left:1px dotted #b0b0b0"></div>
<div class="abs" style="left:89px;top:313px;width:8px;height:1px;border-top:1px dotted #b0b0b0"></div>
<svg class="abs" style="left:70px;top:305px" width="18" height="18" viewBox="0 0 18 18"><circle cx="9" cy="9" r="7.6" fill="#fff" stroke="#666" stroke-width="1.5"/><path d="M6 6l5.2 5.2M11.6 7.6v4H7.6" fill="none" stroke="#444" stroke-width="1.6"/></svg>
<svg class="abs" style="left:102px;top:307px" width="21" height="15" viewBox="0 0 21 15"><path d="M0.5 0.5h7l2 2h8v5h-17z" fill="#7b7b7b"/><path d="M0.5 14.5l3-8h17l-3 8z" fill="#fbbf5c"/></svg>
<div class="t" style="left:131px;top:307px;font-size:13.4px;line-height:17px;color:#333">Fingernagels</div>
<div class="abs" style="left:113px;top:325px;width:1px;height:27px;border-left:1px dotted #b0b0b0"></div>
<div class="abs" style="left:113px;top:352px;width:18px;height:1px;border-top:1px dotted #b0b0b0"></div>
<svg class="abs" style="left:137px;top:343px" width="19" height="19" viewBox="0 0 19 19"><path d="M0.5 18c0-4 3-6 9-6s9 2 9 6z" fill="url(#gpersg)"/><circle cx="9.5" cy="7.5" r="4.8" fill="url(#gface)"/><path d="M4.7 7.5c-1-5 2-7 4.8-7s5.8 2 4.8 7c-1-2-2-3.5-4.8-3.5s-3.8 1.5-4.8 3.5z" fill="#b9703f"/></svg>
<div class="t" style="left:165px;top:346px;font-size:13.6px;line-height:17px;color:#333">Meiwurker 4</div>
<div class="t" style="left:259px;top:346px;font-size:13.4px;line-height:17px;color:#333">Manicurist</div>
<div class="abs" style="left:89px;top:391px;width:8px;height:1px;border-top:1px dotted #b0b0b0"></div>
<svg class="abs" style="left:70px;top:383px" width="18" height="18" viewBox="0 0 18 18"><circle cx="9" cy="9" r="7.6" fill="#fff" stroke="#666" stroke-width="1.5"/><path d="M6 6l5.2 5.2M11.6 7.6v4H7.6" fill="none" stroke="#444" stroke-width="1.6"/></svg>
<svg class="abs" style="left:102px;top:385px" width="21" height="15" viewBox="0 0 21 15"><path d="M0.5 0.5h7l2 2h8v5h-17z" fill="#7b7b7b"/><path d="M0.5 14.5l3-8h17l-3 8z" fill="#fbbf5c"/></svg>
<div class="t" style="left:131px;top:385px;font-size:13.4px;line-height:17px;color:#333">Hier</div>
<div class="abs" style="left:113px;top:403px;width:1px;height:27px;border-left:1px dotted #b0b0b0"></div>
<div class="abs" style="left:113px;top:430px;width:18px;height:1px;border-top:1px dotted #b0b0b0"></div>
<svg class="abs" style="left:137px;top:421px" width="19" height="19" viewBox="0 0 19 19"><path d="M0.5 18c0-4 3-6 9-6s9 2 9 6z" fill="url(#gpersg)"/><circle cx="9.5" cy="7.5" r="4.8" fill="url(#gface)"/><path d="M4.7 7.5c-1-5 2-7 4.8-7s5.8 2 4.8 7c-1-2-2-3.5-4.8-3.5s-3.8 1.5-4.8 3.5z" fill="#b9703f"/></svg>
<div class="t" style="left:165px;top:424px;font-size:13.6px;line-height:17px;color:#333">Meiwurker 2</div>
<div class="t" style="left:259px;top:424px;font-size:13.4px;line-height:17px;color:#333">Kapper</div>
<div class="abs" style="left:89px;top:469px;width:8px;height:1px;border-top:1px dotted #b0b0b0"></div>
<svg class="abs" style="left:70px;top:461px" width="18" height="18" viewBox="0 0 18 18"><circle cx="9" cy="9" r="7.6" fill="#fff" stroke="#666" stroke-width="1.5"/><path d="M6 6l5.2 5.2M11.6 7.6v4H7.6" fill="none" stroke="#444" stroke-width="1.6"/></svg>
<svg class="abs" style="left:102px;top:463px" width="21" height="15" viewBox="0 0 21 15"><path d="M0.5 0.5h7l2 2h8v5h-17z" fill="#7b7b7b"/><path d="M0.5 14.5l3-8h17l-3 8z" fill="#fbbf5c"/></svg>
<div class="t" style="left:131px;top:463px;font-size:13.4px;line-height:17px;color:#333">SPA</div>
<div class="abs" style="left:113px;top:481px;width:1px;height:27px;border-left:1px dotted #b0b0b0"></div>
<div class="abs" style="left:113px;top:508px;width:18px;height:1px;border-top:1px dotted #b0b0b0"></div>
<svg class="abs" style="left:137px;top:499px" width="19" height="19" viewBox="0 0 19 19"><path d="M0.5 18c0-4 3-6 9-6s9 2 9 6z" fill="url(#gpersg)"/><circle cx="9.5" cy="7.5" r="4.8" fill="url(#gface)"/><path d="M4.7 7.5c-1-5 2-7 4.8-7s5.8 2 4.8 7c-1-2-2-3.5-4.8-3.5s-3.8 1.5-4.8 3.5z" fill="#b9703f"/></svg>
<div class="t" style="left:165px;top:502px;font-size:13.6px;line-height:17px;color:#333">Meiwurker 5</div>
<div class="t" style="left:259px;top:502px;font-size:13.4px;line-height:17px;color:#333">SPA master</div>
<div class="abs" style="left:404px;top:158px;width:1115px;height:688px;background:#efefef"></div>

<!-- grids -->
<div class="abs" style="left:412px;top:166px;width:338px;height:650px;border:2px solid #b9b9b9;border-bottom-color:#c2c2c2;border-right:1px solid #c4c4c4;background:#fff;overflow:hidden;box-shadow:0 -1px 0 #d2d2d2,-1px 0 0 #d2d2d2">
<div class="abs" style="left:0;top:0;width:335px;height:32px;background:#f4f4f4;border-bottom:1px solid #b9b9b9;border-right:1px solid #b9b9b9"></div>
<div class="t" style="left:0;top:7px;width:334px;text-align:center;font-size:13.4px;line-height:17px;color:#3f3b4a">1. Meiwurker 4 (Fingernagels)</div>
<div class="abs" style="left:0;top:32px;width:335px;height:33px;background:#f4f4f4;border-bottom:1px solid #b9b9b9;border-right:1px solid #b9b9b9"></div><div class="abs" style="left:0;top:65px;width:335px;height:1px;background:#d9d9d9"></div>
<div class="abs" style="left:130px;top:32px;width:1px;height:33px;background:#c4c4c4"></div>
<div class="abs" style="left:180px;top:32px;width:1px;height:33px;background:#c4c4c4"></div>
<div class="t" style="left:31px;top:41px;font-size:13.8px;line-height:17px;color:#3f3b4a">Datum</div>
<svg class="abs" style="left:108px;top:47px" width="12" height="7" viewBox="0 0 12 7"><path d="M0.5 6.5L6 0.5L11.5 6.5z" fill="#6b6b6b"/></svg>
<div class="t" style="left:131px;top:41px;width:49px;text-align:center;font-size:13.8px;line-height:17px;color:#3f3b4a">Tiid</div>
<div class="t" style="left:181px;top:41px;width:153px;text-align:center;font-size:13.8px;line-height:17px;color:#3f3b4a">Kliint</div>
<div class="abs" style="left:0;top:66px;width:335px;height:20px;background:#d9f0fd"></div>
<div class="abs" style="left:32px;top:66px;width:303px;height:20px;background:#007cc2"></div>
<div class="abs" style="left:32px;top:66px;width:303px;height:20px;border:1px dotted #e88a3c"></div>
<svg class="abs" style="left:6px;top:66px" width="18" height="18" viewBox="0 0 18 18"><circle cx="9" cy="9" r="7.7" fill="none" stroke="#606060" stroke-width="1.3"/><path d="M6 6l5.2 5.2M11.6 7.6v4H7.6" fill="none" stroke="#333" stroke-width="1.6"/></svg>
<div class="t" style="left:33px;top:66px;font-size:14px;line-height:18px;color:#00e4f5">23.08.2024</div>
<div class="t" style="left:181px;top:66px;font-size:14px;line-height:18px;color:#00e4f5">freed</div>
<div class="abs" style="left:0;top:86px;width:335px;height:20px;background:#ddfae2"></div>
<div class="t" style="left:131px;top:86px;font-size:14px;line-height:18px;color:#4a4556">09:00</div>
<div class="abs" style="left:0;top:106px;width:335px;height:20px;background:#d9f0fd"></div>
<div class="t" style="left:131px;top:106px;font-size:14px;line-height:18px;color:#4a4556">09:30</div>
<div class="abs" style="left:0;top:126px;width:335px;height:20px;background:#ddfae2"></div>
<div class="t" style="left:131px;top:126px;font-size:14px;line-height:18px;color:#4a4556">10:00</div>
<div class="abs" style="left:0;top:146px;width:335px;height:20px;background:#d9f0fd"></div>
<div class="t" style="left:131px;top:146px;font-size:14px;line-height:18px;color:#4a4556">10:30</div>
<div class="abs" style="left:0;top:166px;width:335px;height:20px;background:#ddfae2"></div>
<div class="t" style="left:131px;top:166px;font-size:14px;line-height:18px;color:#4a4556">11:00</div>
<div class="abs" style="left:0;top:186px;width:335px;height:20px;background:#d9f0fd"></div>
<div class="t" style="left:131px;top:186px;font-size:14px;line-height:18px;color:#4a4556">11:30</div>
<div class="abs" style="left:0;top:206px;width:335px;height:20px;background:#ddfae2"></div>
<div class="t" style="left:131px;top:206px;font-size:14px;line-height:18px;color:#4a4556">12:00</div>
<div class="abs" style="left:0;top:226px;width:335px;height:20px;background:#d9f0fd"></div>
<div class="abs" style="left:131px;top:226px;width:204px;height:20px;background:#fdd1e3"></div>
<div class="t" style="left:181px;top:226px;font-size:14px;line-height:18px;color:#c9172a">Opdrachtjouwer 3</div>
<div class="t" style="left:131px;top:226px;font-size:14px;line-height:18px;color:#c9172a">12:30</div>
<div class="abs" style="left:0;top:246px;width:335px;height:20px;background:#ddfae2"></div>
<div class="t" style="left:131px;top:246px;font-size:14px;line-height:18px;color:#4a4556">13:00</div>
<div class="abs" style="left:0;top:266px;width:335px;height:20px;background:#d9f0fd"></div>
<div class="t" style="left:131px;top:266px;font-size:14px;line-height:18px;color:#4a4556">13:30</div>
<div class="abs" style="left:0;top:286px;width:335px;height:20px;background:#ddfae2"></div>
<div class="t" style="left:131px;top:286px;font-size:14px;line-height:18px;color:#4a4556">14:00</div>
<div class="abs" style="left:0;top:306px;width:335px;height:20px;background:#d9f0fd"></div>
<div class="t" style="left:131px;top:306px;font-size:14px;line-height:18px;color:#4a4556">14:30</div>
<div class="abs" style="left:0;top:326px;width:335px;height:20px;background:#ddfae2"></div>
<div class="t" style="left:131px;top:326px;font-size:14px;line-height:18px;color:#4a4556">15:00</div>
<div class="abs" style="left:0;top:346px;width:335px;height:20px;background:#d9f0fd"></div>
<div class="t" style="left:131px;top:346px;font-size:14px;line-height:18px;color:#4a4556">15:30</div>
<div class="abs" style="left:0;top:366px;width:335px;height:20px;background:#ddfae2"></div>
<div class="t" style="left:131px;top:366px;font-size:14px;line-height:18px;color:#4a4556">16:00</div>
<div class="abs" style="left:0;top:386px;width:335px;height:20px;background:#d9f0fd"></div>
<div class="t" style="left:131px;top:386px;font-size:14px;line-height:18px;color:#4a4556">16:30</div>
<div class="abs" style="left:0;top:406px;width:335px;height:20px;background:#ddfae2"></div>
<div class="t" style="left:131px;top:406px;font-size:14px;line-height:18px;color:#4a4556">17:00</div>
<div class="abs" style="left:0;top:426px;width:335px;height:20px;background:#d9f0fd"></div>
<div class="t" style="left:131px;top:426px;font-size:14px;line-height:18px;color:#4a4556">17:30</div>
<div class="abs" style="left:0;top:446px;width:335px;height:20px;background:#ddfae2"></div>
<div class="abs" style="left:32px;top:446px;width:303px;height:20px;background:#007cc2"></div>
<svg class="abs" style="left:6px;top:446px" width="18" height="18" viewBox="0 0 18 18"><circle cx="9" cy="9" r="7.7" fill="none" stroke="#606060" stroke-width="1.3"/><path d="M6 6l5.2 5.2M11.6 7.6v4H7.6" fill="none" stroke="#333" stroke-width="1.6"/></svg>
<div class="t" style="left:33px;top:446px;font-size:14px;line-height:18px;color:#ffffff">24.08.2024</div>
<div class="t" style="left:181px;top:446px;font-size:14px;line-height:18px;color:#ffffff">sneon</div>
<div class="abs" style="left:0;top:466px;width:335px;height:20px;background:#d9f0fd"></div>
<div class="t" style="left:131px;top:466px;font-size:14px;line-height:18px;color:#4a4556">09:00</div>
<div class="abs" style="left:0;top:486px;width:335px;height:20px;background:#ddfae2"></div>
<div class="t" style="left:131px;top:486px;font-size:14px;line-height:18px;color:#4a4556">09:30</div>
<div class="abs" style="left:0;top:506px;width:335px;height:20px;background:#d9f0fd"></div>
<div class="t" style="left:131px;top:506px;font-size:14px;line-height:18px;color:#4a4556">10:00</div>
<div class="abs" style="left:0;top:526px;width:335px;height:20px;background:#ddfae2"></div>
<div class="t" style="left:131px;top:526px;font-size:14px;line-height:18px;color:#4a4556">10:30</div>
<div class="abs" style="left:0;top:546px;width:335px;height:20px;background:#d9f0fd"></div>
<div class="t" style="left:131px;top:546px;font-size:14px;line-height:18px;color:#4a4556">11:00</div>
<div class="abs" style="left:0;top:566px;width:335px;height:20px;background:#ddfae2"></div>
<div class="t" style="left:131px;top:566px;font-size:14px;line-height:18px;color:#4a4556">11:30</div>
<div class="abs" style="left:0;top:586px;width:335px;height:20px;background:#d9f0fd"></div>
<div class="t" style="left:131px;top:586px;font-size:14px;line-height:18px;color:#4a4556">12:00</div>
<div class="abs" style="left:0;top:606px;width:335px;height:20px;background:#ddfae2"></div>
<div class="t" style="left:131px;top:606px;font-size:14px;line-height:18px;color:#4a4556">12:30</div>
<div class="abs" style="left:0;top:626px;width:335px;height:20px;background:#d9f0fd"></div>
<div class="t" style="left:131px;top:626px;font-size:14px;line-height:18px;color:#4a4556">13:00</div>
</div>
<div class="abs" style="left:750px;top:165px;width:21px;height:651px;background:#fff;border:1px solid #c8c8c8;border-top:2px solid #c2c2c2;border-bottom:2px solid #c4c4c4;border-left:none"></div>
<svg class="abs" style="left:756px;top:175px" width="8" height="5" viewBox="0 0 8 5"><path d="M0 4.5L4 0.5L8 4.5z" fill="#707070"/></svg>
<div class="abs" style="left:755px;top:188px;width:10px;height:461px;background:#b4b4b4"></div>
<svg class="abs" style="left:756px;top:801px" width="8" height="5" viewBox="0 0 8 5"><path d="M0 0.5L4 4.5L8 0.5z" fill="#707070"/></svg>
<div class="abs" style="left:779px;top:166px;width:338px;height:650px;border:2px solid #b9b9b9;border-bottom-color:#c2c2c2;border-right:1px solid #c4c4c4;background:#fff;overflow:hidden;box-shadow:0 -1px 0 #d2d2d2,-1px 0 0 #d2d2d2">
<div class="abs" style="left:0;top:0;width:335px;height:32px;background:#f4f4f4;border-bottom:1px solid #b9b9b9;border-right:1px solid #b9b9b9"></div>
<div class="t" style="left:0;top:7px;width:334px;text-align:center;font-size:13.4px;line-height:17px;color:#3f3b4a">2. Meiwurker 2 (Hier)</div>
<div class="abs" style="left:0;top:32px;width:335px;height:33px;background:#f4f4f4;border-bottom:1px solid #b9b9b9;border-right:1px solid #b9b9b9"></div><div class="abs" style="left:0;top:65px;width:335px;height:1px;background:#d9d9d9"></div>
<div class="abs" style="left:130px;top:32px;width:1px;height:33px;background:#c4c4c4"></div>
<div class="abs" style="left:180px;top:32px;width:1px;height:33px;background:#c4c4c4"></div>
<div class="t" style="left:31px;top:41px;font-size:13.8px;line-height:17px;color:#3f3b4a">Datum</div>
<svg class="abs" style="left:108px;top:47px" width="12" height="7" viewBox="0 0 12 7"><path d="M0.5 6.5L6 0.5L11.5 6.5z" fill="#6b6b6b"/></svg>
<div class="t" style="left:131px;top:41px;width:49px;text-align:center;font-size:13.8px;line-height:17px;color:#3f3b4a">Tiid</div>
<div class="t" style="left:181px;top:41px;width:153px;text-align:center;font-size:13.8px;line-height:17px;color:#3f3b4a">Kliint</div>
<div class="abs" style="left:0;top:66px;width:335px;height:20px;background:#d9f0fd"></div>
<div class="abs" style="left:32px;top:66px;width:303px;height:20px;background:#007cc2"></div>
<svg class="abs" style="left:6px;top:66px" width="18" height="18" viewBox="0 0 18 18"><circle cx="9" cy="9" r="7.7" fill="none" stroke="#606060" stroke-width="1.3"/><path d="M6 6l5.2 5.2M11.6 7.6v4H7.6" fill="none" stroke="#333" stroke-width="1.6"/></svg>
<div class="t" style="left:33px;top:66px;font-size:14px;line-height:18px;color:#00e4f5">23.08.2024</div>
<div class="t" style="left:181px;top:66px;font-size:14px;line-height:18px;color:#00e4f5">freed</div>
<div class="abs" style="left:0;top:86px;width:335px;height:20px;background:#ddfae2"></div>
<div class="t" style="left:131px;top:86px;font-size:14px;line-height:18px;color:#4a4556">09:00</div>
<div class="abs" style="left:0;top:106px;width:335px;height:20px;background:#d9f0fd"></div>
<div class="t" style="left:131px;top:106px;font-size:14px;line-height:18px;color:#4a4556">09:30</div>
<div class="abs" style="left:0;top:126px;width:335px;height:20px;background:#ddfae2"></div>
<div class="abs" style="left:131px;top:126px;width:204px;height:20px;background:#fefbbf"></div>
<div class="t" style="left:181px;top:126px;font-size:14px;line-height:18px;color:#4a4550">Opdrachtjouwer 1</div>
<svg class="abs" style="left:111px;top:130px" width="10" height="10" viewBox="0 0 10 10"><path d="M0.8 5.2l3 3.2L9.2 1.2" fill="none" stroke="#111" stroke-width="2.5"/></svg>
<div class="t" style="left:131px;top:126px;font-size:14px;line-height:18px;color:#4a4550">10:00</div>
<div class="abs" style="left:0;top:146px;width:335px;height:20px;background:#d9f0fd"></div>
<div class="t" style="left:131px;top:146px;font-size:14px;line-height:18px;color:#4a4556">10:30</div>
<div class="abs" style="left:0;top:166px;width:335px;height:20px;background:#ddfae2"></div>
<div class="abs" style="left:131px;top:166px;width:204px;height:20px;background:#fefbbf"></div>
<div class="t" style="left:181px;top:166px;font-size:14px;line-height:18px;color:#4a4550">Opdrachtjouwer 2</div>
<svg class="abs" style="left:111px;top:170px" width="10" height="10" viewBox="0 0 10 10"><path d="M0.8 5.2l3 3.2L9.2 1.2" fill="none" stroke="#111" stroke-width="2.5"/></svg>
<svg class="abs" style="left:91px;top:170px" width="13" height="12" viewBox="0 0 13 12"><path d="M2 1.5l9 9M11 1.5l-9 9M6.5 0.5v11" stroke="#f59a00" stroke-width="3" stroke-linecap="round"/><path d="M3 2.5l7 7M10 2.5l-7 7" stroke="#ffd21a" stroke-width="1.4"/><circle cx="6.5" cy="6" r="2" fill="#fff23a"/></svg>
<div class="t" style="left:131px;top:166px;font-size:14px;line-height:18px;color:#4a4550">11:00</div>
<div class="abs" style="left:0;top:186px;width:335px;height:20px;background:#d9f0fd"></div>
<div class="t" style="left:131px;top:186px;font-size:14px;line-height:18px;color:#4a4556">11:30</div>
<div class="abs" style="left:0;top:206px;width:335px;height:20px;background:#ddfae2"></div>
<div class="t" style="left:131px;top:206px;font-size:14px;line-height:18px;color:#4a4556">12:00</div>
<div class="abs" style="left:0;top:226px;width:335px;height:20px;background:#d9f0fd"></div>
<div class="t" style="left:131px;top:226px;font-size:14px;line-height:18px;color:#4a4556">12:30</div>
<div class="abs" style="left:0;top:246px;width:335px;height:20px;background:#ddfae2"></div>
<div class="t" style="left:131px;top:246px;font-size:14px;line-height:18px;color:#4a4556">13:00</div>
<div class="abs" style="left:0;top:266px;width:335px;height:20px;background:#d9f0fd"></div>
<div class="t" style="left:131px;top:266px;font-size:14px;line-height:18px;color:#4a4556">13:30</div>
<div class="abs" style="left:0;top:286px;width:335px;height:20px;background:#ddfae2"></div>
<div class="t" style="left:131px;top:286px;font-size:14px;line-height:18px;color:#4a4556">14:00</div>
<div class="abs" style="left:0;top:306px;width:335px;height:20px;background:#d9f0fd"></div>
<div class="t" style="left:131px;top:306px;font-size:14px;line-height:18px;color:#4a4556">14:30</div>
<div class="abs" style="left:0;top:326px;width:335px;height:20px;background:#ddfae2"></div>
<div class="t" style="left:131px;top:326px;font-size:14px;line-height:18px;color:#4a4556">15:00</div>
<div class="abs" style="left:0;top:346px;width:335px;height:20px;background:#d9f0fd"></div>
<div class="t" style="left:131px;top:346px;font-size:14px;line-height:18px;color:#4a4556">15:30</div>
<div class="abs" style="left:0;top:366px;width:335px;height:20px;background:#ddfae2"></div>
<div class="t" style="left:131px;top:366px;font-size:14px;line-height:18px;color:#4a4556">16:00</div>
<div class="abs" style="left:0;top:386px;width:335px;height:20px;background:#d9f0fd"></div>
<div class="t" style="left:131px;top:386px;font-size:14px;line-height:18px;color:#4a4556">16:30</div>
<div class="abs" style="left:0;top:406px;width:335px;height:20px;background:#ddfae2"></div>
<div class="t" style="left:131px;top:406px;font-size:14px;line-height:18px;color:#4a4556">17:00</div>
<div class="abs" style="left:0;top:426px;width:335px;height:20px;background:#d9f0fd"></div>
<div class="t" style="left:131px;top:426px;font-size:14px;line-height:18px;color:#4a4556">17:30</div>
<div class="abs" style="left:0;top:446px;width:335px;height:20px;background:#ddfae2"></div>
<div class="abs" style="left:32px;top:446px;width:303px;height:20px;background:#007cc2"></div>
<svg class="abs" style="left:6px;top:446px" width="18" height="18" viewBox="0 0 18 18"><circle cx="9" cy="9" r="7.7" fill="none" stroke="#606060" stroke-width="1.3"/><path d="M6 6l5.2 5.2M11.6 7.6v4H7.6" fill="none" stroke="#333" stroke-width="1.6"/></svg>
<div class="t" style="left:33px;top:446px;font-size:14px;line-height:18px;color:#ffffff">24.08.2024</div>
<div class="t" style="left:181px;top:446px;font-size:14px;line-height:18px;color:#ffffff">sneon</div>
<div class="abs" style="left:0;top:466px;width:335px;height:20px;background:#d9f0fd"></div>
<div class="t" style="left:131px;top:466px;font-size:14px;line-height:18px;color:#4a4556">09:00</div>
<div class="abs" style="left:0;top:486px;width:335px;height:20px;background:#ddfae2"></div>
<div class="t" style="left:131px;top:486px;font-size:14px;line-height:18px;color:#4a4556">09:30</div>
<div class="abs" style="left:0;top:506px;width:335px;height:20px;background:#d9f0fd"></div>
<div class="t" style="left:131px;top:506px;font-size:14px;line-height:18px;color:#4a4556">10:00</div>
<div class="abs" style="left:0;top:526px;width:335px;height:20px;background:#ddfae2"></div>
<div class="t" style="left:131px;top:526px;font-size:14px;line-height:18px;color:#4a4556">10:30</div>
<div class="abs" style="left:0;top:546px;width:335px;height:20px;background:#d9f0fd"></div>
<div class="t" style="left:131px;top:546px;font-size:14px;line-height:18px;color:#4a4556">11:00</div>
<div class="abs" style="left:0;top:566px;width:335px;height:20px;background:#ddfae2"></div>
<div class="abs" style="left:131px;top:566px;width:204px;height:20px;background:#fefbbf"></div>
<div class="t" style="left:181px;top:566px;font-size:14px;line-height:18px;color:#c9172a">Opdrachtjouwer 6</div>
<svg class="abs" style="left:68px;top:567px" width="20" height="18" viewBox="0 0 20 18"><path d="M3 2c-3 3 1 9 5 12s7 3 9 1l-3-3-2 1c-2-1-4-3-5-5l1-2z" fill="#111"/><path d="M3 2l3 3M17 15l-3-3" stroke="#e8473a" stroke-width="2.2"/></svg>
<div class="t" style="left:131px;top:566px;font-size:14px;line-height:18px;color:#c9172a">11:30</div>
<div class="abs" style="left:0;top:586px;width:335px;height:20px;background:#d9f0fd"></div>
<div class="t" style="left:131px;top:586px;font-size:14px;line-height:18px;color:#4a4556">12:00</div>
<div class="abs" style="left:0;top:606px;width:335px;height:20px;background:#ddfae2"></div>
<div class="t" style="left:131px;top:606px;font-size:14px;line-height:18px;color:#4a4556">12:30</div>
<div class="abs" style="left:0;top:626px;width:335px;height:20px;background:#d9f0fd"></div>
<div class="t" style="left:131px;top:626px;font-size:14px;line-height:18px;color:#4a4556">13:00</div>
</div>
<div class="abs" style="left:1117px;top:165px;width:21px;height:651px;background:#fff;border:1px solid #c8c8c8;border-top:2px solid #c2c2c2;border-bottom:2px solid #c4c4c4;border-left:none"></div>
<svg class="abs" style="left:1123px;top:175px" width="8" height="5" viewBox="0 0 8 5"><path d="M0 4.5L4 0.5L8 4.5z" fill="#707070"/></svg>
<div class="abs" style="left:1122px;top:188px;width:10px;height:461px;background:#b4b4b4"></div>
<svg class="abs" style="left:1123px;top:801px" width="8" height="5" viewBox="0 0 8 5"><path d="M0 0.5L4 4.5L8 0.5z" fill="#707070"/></svg>
<div class="abs" style="left:1147px;top:166px;width:338px;height:650px;border:2px solid #b9b9b9;border-bottom-color:#c2c2c2;border-right:1px solid #c4c4c4;background:#fff;overflow:hidden;box-shadow:0 -1px 0 #d2d2d2,-1px 0 0 #d2d2d2">
<div class="abs" style="left:0;top:0;width:335px;height:32px;background:#f4f4f4;border-bottom:1px solid #b9b9b9;border-right:1px solid #b9b9b9"></div>
<div class="t" style="left:0;top:7px;width:334px;text-align:center;font-size:13.4px;line-height:17px;color:#3f3b4a">3. Meiwurker 5 (SPA)</div>
<div class="abs" style="left:0;top:32px;width:335px;height:33px;background:#f4f4f4;border-bottom:1px solid #b9b9b9;border-right:1px solid #b9b9b9"></div><div class="abs" style="left:0;top:65px;width:335px;height:1px;background:#d9d9d9"></div>
<div class="abs" style="left:130px;top:32px;width:1px;height:33px;background:#c4c4c4"></div>
<div class="abs" style="left:180px;top:32px;width:1px;height:33px;background:#c4c4c4"></div>
<div class="t" style="left:31px;top:41px;font-size:13.8px;line-height:17px;color:#3f3b4a">Datum</div>
<svg class="abs" style="left:108px;top:47px" width="12" height="7" viewBox="0 0 12 7"><path d="M0.5 6.5L6 0.5L11.5 6.5z" fill="#6b6b6b"/></svg>
<div class="t" style="left:131px;top:41px;width:49px;text-align:center;font-size:13.8px;line-height:17px;color:#3f3b4a">Tiid</div>
<div class="t" style="left:181px;top:41px;width:153px;text-align:center;font-size:13.8px;line-height:17px;color:#3f3b4a">Kliint</div>
<div class="abs" style="left:0;top:66px;width:335px;height:20px;background:#d9f0fd"></div>
<div class="abs" style="left:32px;top:66px;width:303px;height:20px;background:#007cc2"></div>
<svg class="abs" style="left:6px;top:66px" width="18" height="18" viewBox="0 0 18 18"><circle cx="9" cy="9" r="7.7" fill="none" stroke="#606060" stroke-width="1.3"/><path d="M6 6l5.2 5.2M11.6 7.6v4H7.6" fill="none" stroke="#333" stroke-width="1.6"/></svg>
<div class="t" style="left:33px;top:66px;font-size:14px;line-height:18px;color:#00e4f5">23.08.2024</div>
<div class="t" style="left:181px;top:66px;font-size:14px;line-height:18px;color:#00e4f5">freed</div>
<div class="abs" style="left:0;top:86px;width:335px;height:20px;background:#ddfae2"></div>
<div class="t" style="left:131px;top:86px;font-size:14px;line-height:18px;color:#4a4556">09:00</div>
<div class="abs" style="left:0;top:106px;width:335px;height:20px;background:#d9f0fd"></div>
<div class="t" style="left:131px;top:106px;font-size:14px;line-height:18px;color:#4a4556">09:30</div>
<div class="abs" style="left:0;top:126px;width:335px;height:20px;background:#ddfae2"></div>
<div class="abs" style="left:131px;top:126px;width:204px;height:20px;background:#fefbbf"></div>
<div class="t" style="left:181px;top:126px;font-size:14px;line-height:18px;color:#4a4550">Opdrachtjouwer 4</div>
<svg class="abs" style="left:111px;top:130px" width="10" height="10" viewBox="0 0 10 10"><path d="M0.8 5.2l3 3.2L9.2 1.2" fill="none" stroke="#111" stroke-width="2.5"/></svg>
<svg class="abs" style="left:86px;top:125px" width="22" height="22" viewBox="0 0 22 22"><path d="M3.5 5.5l3-3" stroke="#8a8a8a" stroke-width="3"/><path d="M4.5 4.5l3 3" stroke="#9a9a9a" stroke-width="2"/><path d="M7 6l8.5 8.5" stroke="#777" stroke-width="5.5"/><path d="M7 6l8.5 8.5" stroke="#e4e4e4" stroke-width="3.5"/><path d="M12 11l3 3" stroke="#555" stroke-width="4"/><path d="M15.5 14.5l4 4" stroke="#8a8a8a" stroke-width="1.5"/></svg>
<div class="t" style="left:131px;top:126px;font-size:14px;line-height:18px;color:#4a4550">10:00</div>
<div class="abs" style="left:0;top:146px;width:335px;height:20px;background:#d9f0fd"></div>
<div class="t" style="left:131px;top:146px;font-size:14px;line-height:18px;color:#4a4556">10:30</div>
<div class="abs" style="left:0;top:166px;width:335px;height:20px;background:#ddfae2"></div>
<div class="t" style="left:131px;top:166px;font-size:14px;line-height:18px;color:#4a4556">11:00</div>
<div class="abs" style="left:0;top:186px;width:335px;height:20px;background:#d9f0fd"></div>
<div class="t" style="left:131px;top:186px;font-size:14px;line-height:18px;color:#4a4556">11:30</div>
<div class="abs" style="left:0;top:206px;width:335px;height:20px;background:#ddfae2"></div>
<div class="t" style="left:131px;top:206px;font-size:14px;line-height:18px;color:#4a4556">12:00</div>
<div class="abs" style="left:0;top:226px;width:335px;height:20px;background:#d9f0fd"></div>
<div class="t" style="left:131px;top:226px;font-size:14px;line-height:18px;color:#4a4556">12:30</div>
<div class="abs" style="left:0;top:246px;width:335px;height:20px;background:#ddfae2"></div>
<div class="t" style="left:131px;top:246px;font-size:14px;line-height:18px;color:#4a4556">13:00</div>
<div class="abs" style="left:0;top:266px;width:335px;height:20px;background:#d9f0fd"></div>
<div class="t" style="left:131px;top:266px;font-size:14px;line-height:18px;color:#4a4556">13:30</div>
<div class="abs" style="left:0;top:286px;width:335px;height:20px;background:#ddfae2"></div>
<div class="t" style="left:131px;top:286px;font-size:14px;line-height:18px;color:#4a4556">14:00</div>
<div class="abs" style="left:0;top:306px;width:335px;height:20px;background:#d9f0fd"></div>
<div class="t" style="left:131px;top:306px;font-size:14px;line-height:18px;color:#4a4556">14:30</div>
<div class="abs" style="left:0;top:326px;width:335px;height:20px;background:#ddfae2"></div>
<div class="abs" style="left:131px;top:326px;width:204px;height:20px;background:#fefbbf"></div>
<div class="t" style="left:181px;top:326px;font-size:14px;line-height:18px;color:#4a4550">Opdrachtjouwer 5</div>
<svg class="abs" style="left:111px;top:330px" width="10" height="10" viewBox="0 0 10 10"><path d="M0.8 5.2l3 3.2L9.2 1.2" fill="none" stroke="#111" stroke-width="2.5"/></svg>
<svg class="abs" style="left:85px;top:329px" width="21" height="14" viewBox="0 0 21 14"><path d="M1 7c3-5 6-6 9.5-6s6.5 1 9.5 6c-3 5-6 6-9.5 6s-6.5-1-9.5-6z" fill="#f2f2f2" stroke="#8b5a3c" stroke-width="1.3"/><circle cx="10.5" cy="7" r="4" fill="#6b88b8"/><circle cx="10.5" cy="7" r="1.8" fill="#1d2a44"/></svg>
<div class="t" style="left:131px;top:326px;font-size:14px;line-height:18px;color:#4a4550">15:00</div>
<div class="abs" style="left:0;top:346px;width:335px;height:20px;background:#d9f0fd"></div>
<div class="t" style="left:131px;top:346px;font-size:14px;line-height:18px;color:#4a4556">15:30</div>
<div class="abs" style="left:0;top:366px;width:335px;height:20px;background:#ddfae2"></div>
<div class="t" style="left:131px;top:366px;font-size:14px;line-height:18px;color:#4a4556">16:00</div>
<div class="abs" style="left:0;top:386px;width:335px;height:20px;background:#d9f0fd"></div>
<div class="t" style="left:131px;top:386px;font-size:14px;line-height:18px;color:#4a4556">16:30</div>
<div class="abs" style="left:0;top:406px;width:335px;height:20px;background:#ddfae2"></div>
<div class="t" style="left:131px;top:406px;font-size:14px;line-height:18px;color:#4a4556">17:00</div>
<div class="abs" style="left:0;top:426px;width:335px;height:20px;background:#d9f0fd"></div>
<div class="t" style="left:131px;top:426px;font-size:14px;line-height:18px;color:#4a4556">17:30</div>
<div class="abs" style="left:0;top:446px;width:335px;height:20px;background:#ddfae2"></div>
<div class="abs" style="left:32px;top:446px;width:303px;height:20px;background:#007cc2"></div>
<svg class="abs" style="left:6px;top:446px" width="18" height="18" viewBox="0 0 18 18"><circle cx="9" cy="9" r="7.7" fill="none" stroke="#606060" stroke-width="1.3"/><path d="M6 6l5.2 5.2M11.6 7.6v4H7.6" fill="none" stroke="#333" stroke-width="1.6"/></svg>
<div class="t" style="left:33px;top:446px;font-size:14px;line-height:18px;color:#ffffff">24.08.2024</div>
<div class="t" style="left:181px;top:446px;font-size:14px;line-height:18px;color:#ffffff">sneon</div>
<div class="abs" style="left:0;top:466px;width:335px;height:20px;background:#d9f0fd"></div>
<div class="t" style="left:131px;top:466px;font-size:14px;line-height:18px;color:#4a4556">09:00</div>
<div class="abs" style="left:0;top:486px;width:335px;height:20px;background:#ddfae2"></div>
<div class="t" style="left:131px;top:486px;font-size:14px;line-height:18px;color:#4a4556">09:30</div>
<div class="abs" style="left:0;top:506px;width:335px;height:20px;background:#d9f0fd"></div>
<div class="t" style="left:131px;top:506px;font-size:14px;line-height:18px;color:#4a4556">10:00</div>
<div class="abs" style="left:0;top:526px;width:335px;height:20px;background:#ddfae2"></div>
<div class="t" style="left:131px;top:526px;font-size:14px;line-height:18px;color:#4a4556">10:30</div>
<div class="abs" style="left:0;top:546px;width:335px;height:20px;background:#d9f0fd"></div>
<div class="t" style="left:131px;top:546px;font-size:14px;line-height:18px;color:#4a4556">11:00</div>
<div class="abs" style="left:0;top:566px;width:335px;height:20px;background:#ddfae2"></div>
<div class="t" style="left:131px;top:566px;font-size:14px;line-height:18px;color:#4a4556">11:30</div>
<div class="abs" style="left:0;top:586px;width:335px;height:20px;background:#d9f0fd"></div>
<div class="t" style="left:131px;top:586px;font-size:14px;line-height:18px;color:#4a4556">12:00</div>
<div class="abs" style="left:0;top:606px;width:335px;height:20px;background:#ddfae2"></div>
<div class="t" style="left:131px;top:606px;font-size:14px;line-height:18px;color:#4a4556">12:30</div>
<div class="abs" style="left:0;top:626px;width:335px;height:20px;background:#d9f0fd"></div>
<div class="t" style="left:131px;top:626px;font-size:14px;line-height:18px;color:#4a4556">13:00</div>
</div>
<div class="abs" style="left:1485px;top:165px;width:21px;height:651px;background:#fff;border:1px solid #c8c8c8;border-top:2px solid #c2c2c2;border-bottom:2px solid #c4c4c4;border-left:none"></div>
<svg class="abs" style="left:1491px;top:175px" width="8" height="5" viewBox="0 0 8 5"><path d="M0 4.5L4 0.5L8 4.5z" fill="#707070"/></svg>
<div class="abs" style="left:1490px;top:188px;width:10px;height:461px;background:#b4b4b4"></div>
<svg class="abs" style="left:1491px;top:801px" width="8" height="5" viewBox="0 0 8 5"><path d="M0 0.5L4 4.5L8 0.5z" fill="#707070"/></svg>

<!-- tabbar & status -->
<div class="abs" style="left:21px;top:846px;width:1498px;height:1px;background:#cdcdcd"></div>
<div class="abs" style="left:204px;top:849px;width:1315px;height:1px;background:#cdcdcd"></div>
<div class="abs" style="left:23px;top:846px;width:181px;height:55px;border:1px solid #cdcdcd;border-bottom:none;background:#fff"></div>
<div class="abs" style="left:22px;top:899px;width:182px;height:3px;background:#0f9ff0"></div>
<svg class="abs" style="left:39px;top:861px" width="32" height="28" viewBox="0 0 32 28"><rect x="1.5" y="1.5" width="29" height="25" rx="2.5" fill="#e4eaf6" stroke="#6b84bf" stroke-width="1.2"/><rect x="2" y="2" width="28" height="5" rx="1.5" fill="#6c9ad8"/><circle cx="26" cy="4.5" r="1.3" fill="#e8403a"/></svg>
<div class="t" style="left:82px;top:866px;font-size:12.8px;line-height:17px;color:#2b9be6">Ynskriuwing</div>
<svg class="abs" style="left:172px;top:869px" width="11" height="10" viewBox="0 0 11 10"><path d="M1 0.5L10 9.5M10 0.5L1 9.5" stroke="#2b9be6" stroke-width="2"/></svg>
<svg class="abs" style="left:28px;top:904px" width="21" height="21" viewBox="0 0 21 21"><circle cx="10.5" cy="10.5" r="10" fill="#4f7fba"/><circle cx="10.5" cy="5.8" r="1.8" fill="#fff"/><rect x="9" y="9" width="3" height="8" fill="#fff"/></svg>
<div class="t" style="left:70px;top:907px;font-size:13.8px;line-height:17px;color:#444">7.3.965.10 Standard</div>
<div class="abs" style="left:222px;top:905px;width:1px;height:19px;background:#c8c8c8"></div>
<div class="abs" style="left:392px;top:905px;width:1px;height:19px;background:#c8c8c8"></div>
<div class="abs" style="left:571px;top:905px;width:1px;height:19px;background:#c8c8c8"></div>
<div class="abs" style="left:719px;top:905px;width:1px;height:19px;background:#c8c8c8"></div>
<div class="abs" style="left:868px;top:905px;width:1px;height:19px;background:#c8c8c8"></div>
<div class="abs" style="left:1488px;top:905px;width:1px;height:19px;background:#c8c8c8"></div>
<svg class="abs" style="left:235px;top:904px" width="17" height="20" viewBox="0 0 17 20"><defs><linearGradient id="gdb" x1="0" x2="1"><stop offset="0" stop-color="#c98a3a"/><stop offset="0.4" stop-color="#fbe0a8"/><stop offset="1" stop-color="#d18d3a"/></linearGradient></defs><path d="M1 3c0-3 15-3 15 0v14c0 3-15 3-15 0z" fill="url(#gdb)" stroke="#b5792e" stroke-width="0.8"/><path d="M1 7.5c0 2 15 2 15 0M1 12c0 2 15 2 15 0" fill="none" stroke="#b5792e" stroke-width="0.8"/><ellipse cx="8.5" cy="3" rx="7" ry="1.8" fill="#fde8bb"/></svg>
<div class="t" style="left:274px;top:907px;font-size:13.9px;line-height:17px;color:#444">localhost (utf8)</div>
<svg class="abs" style="left:404px;top:904px" width="20" height="20" viewBox="0 0 20 20"><path d="M1 19c0-5 3-7 9-7s9 2 9 7z" fill="url(#gpersg)"/><circle cx="10" cy="8" r="5" fill="url(#gface)"/><path d="M5 8c-1-5 2-7 5-7s6 2 5 7c-1-2-2-4-5-4s-4 2-5 4z" fill="#b9703f"/></svg>
<div class="t" style="left:444px;top:907px;font-size:13px;line-height:17px;color:#444">NIKOLAY (MAIN)</div>
<svg class="abs" style="left:583px;top:904px" width="19" height="19" viewBox="0 0 19 19"><rect x="0.5" y="0.5" width="18" height="18" fill="#f4f6fb" stroke="#6b84bf"/><rect x="1" y="1" width="17" height="4" fill="#e8533f"/><text x="9.5" y="16.5" font-family="Liberation Serif" font-weight="bold" font-size="11" fill="#2d4a8c" text-anchor="middle">31</text></svg>
<div class="t" style="left:624px;top:907px;font-size:13.8px;line-height:17px;color:#444">23.08.2024</div>
<div class="t" style="left:756px;top:907px;font-size:13.9px;line-height:17px;color:#222">10:41:10:085</div>
<svg class="abs" style="left:1501px;top:909px" width="16" height="16" viewBox="0 0 16 16"><g fill="#6a6a6a"><path d="M13 1l2 2-2 2-2-2z"/><path d="M8 6l2 2-2 2-2-2z"/><path d="M13 6l2 2-2 2-2-2z"/><path d="M3 11l2 2-2 2-2-2z"/><path d="M8 11l2 2-2 2-2-2z"/><path d="M13 11l2 2-2 2-2-2z"/></g></svg>

</body></html>
